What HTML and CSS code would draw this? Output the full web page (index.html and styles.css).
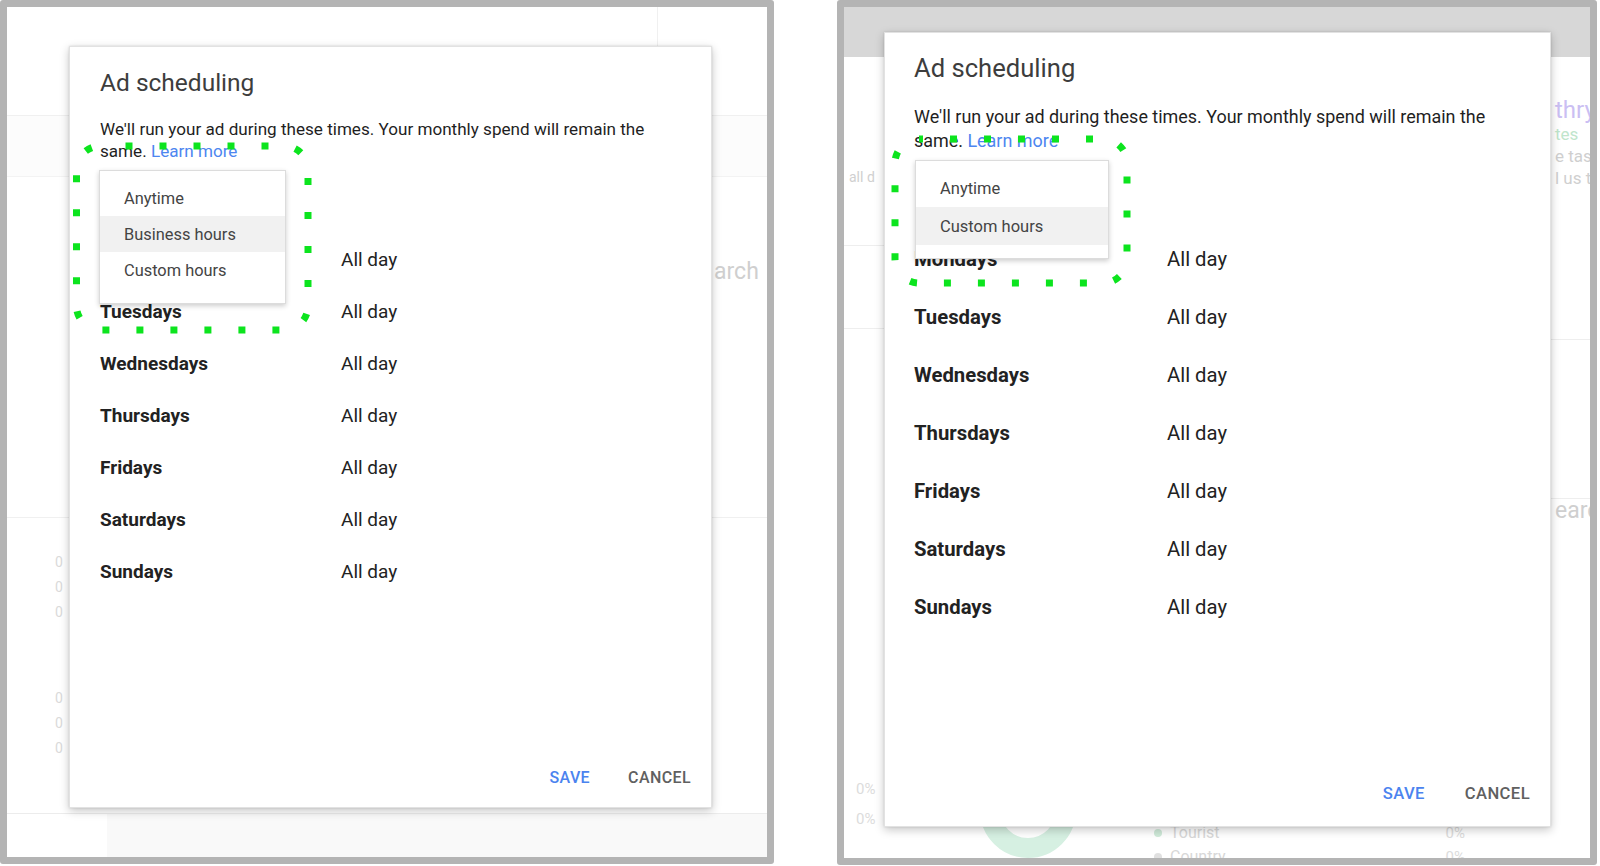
FILE: index.html
```html
<!DOCTYPE html>
<html lang="en">
<head>
<meta charset="utf-8">
<title>Ad scheduling</title>
<link rel="stylesheet" href="styles.css">
</head>
<body>
<div class="page">
  <section class="frame frame-left">
    <div class="bg bg-left">
      <div class="bgl-top"><div class="bgl-top-main"></div></div>
      <div class="bgl-band"></div>
      <div class="bgl-mid"><span class="faint-big">arch</span></div>
      <div class="bgl-lower">
        <div class="digits"><span>0</span><span>0</span><span>0</span></div>
        <div class="digits second"><span>0</span><span>0</span><span>0</span></div>
      </div>
      <div class="bgl-bottom"><div class="bgl-bottom-l"></div><div class="bgl-bottom-r"></div></div>
    </div>

    <div class="dialog dialog-left">
      <h2 class="d-title">Ad scheduling</h2>
      <p class="d-desc">We'll run your ad during these times. Your monthly spend will remain the same. <a class="d-link">Learn more</a></p>
      <div class="days">
        <div class="day">Mondays</div><div class="val">All day</div>
        <div class="day">Tuesdays</div><div class="val">All day</div>
        <div class="day">Wednesdays</div><div class="val">All day</div>
        <div class="day">Thursdays</div><div class="val">All day</div>
        <div class="day">Fridays</div><div class="val">All day</div>
        <div class="day">Saturdays</div><div class="val">All day</div>
        <div class="day">Sundays</div><div class="val">All day</div>
      </div>
      <div class="actions">
        <span class="btn btn-save">Save</span>
        <span class="btn btn-cancel">Cancel</span>
      </div>
      <ul class="menu">
        <li>Anytime</li>
        <li class="hl">Business hours</li>
        <li>Custom hours</li>
      </ul>
    </div>
  </section>

  <section class="frame frame-right">
    <div class="bg bg-right">
      <div class="bgr-head"></div>
      <div class="bgr-body">
        <div class="bgr-left">
          <span class="faint-sm alld">all d</span>
          <div class="rule r1"></div>
          <div class="rule r2"></div>
          <div class="pct"><span>0%</span><span>0%</span></div>
        </div>
        <div class="bgr-mid">
          <div class="chart-row">
            <div class="donut"></div>
            <div class="legend">
              <div class="leg"><i class="dot"></i>Tourist</div>
              <div class="leg"><i class="dot dot2"></i>Country</div>
            </div>
            <div class="legpct"><span>0%</span><span>0%</span></div>
          </div>
        </div>
        <div class="bgr-right">
          <span class="t-purple">thry</span>
          <span class="t-green">tes</span>
          <span class="t-gray">e tas</span>
          <span class="t-gray">l us t</span>
          <div class="rule r3"></div>
          <div class="rule r4"></div>
          <span class="faint-big earc">earc</span>
        </div>
      </div>
    </div>

    <div class="dialog dialog-right">
      <h2 class="d-title">Ad scheduling</h2>
      <p class="d-desc">We'll run your ad during these times. Your monthly spend will remain the same. <a class="d-link">Learn more</a></p>
      <div class="days">
        <div class="day">Mondays</div><div class="val">All day</div>
        <div class="day">Tuesdays</div><div class="val">All day</div>
        <div class="day">Wednesdays</div><div class="val">All day</div>
        <div class="day">Thursdays</div><div class="val">All day</div>
        <div class="day">Fridays</div><div class="val">All day</div>
        <div class="day">Saturdays</div><div class="val">All day</div>
        <div class="day">Sundays</div><div class="val">All day</div>
      </div>
      <div class="actions">
        <span class="btn btn-save">Save</span>
        <span class="btn btn-cancel">Cancel</span>
      </div>
      <ul class="menu">
        <li>Anytime</li>
        <li class="hl">Custom hours</li>
      </ul>
    </div>
  </section>

  <svg class="annot" width="1600" height="866" viewBox="0 0 1600 866" aria-hidden="true">
    <rect x="76.5" y="146" width="231.5" height="184" rx="24" fill="none" stroke="#0ce41e" stroke-width="7" stroke-dasharray="7 27" stroke-dashoffset="9"/>
    <rect x="895" y="139" width="232" height="144" rx="24" fill="none" stroke="#0ce41e" stroke-width="7" stroke-dasharray="7 27" stroke-dashoffset="3"/>
  </svg>
</div>
</body>
</html>
```

FILE: styles.css
```css
* { box-sizing: border-box; }
html, body { margin: 0; padding: 0; }
body {
  width: 1600px;
  height: 866px;
  overflow: hidden;
  background: #ffffff;
  font-family: Roboto, "Liberation Sans", Arial, sans-serif;
  color: #222;
}
.page {
  position: relative;
  display: flex;
  align-items: flex-start;
  gap: 63px;
  width: 1600px;
  height: 866px;
}

/* frames */
.frame {
  display: grid;
  border: 7px solid #b4b4b4;
  border-radius: 3px;
  background: #fff;
  overflow: hidden;
}
.frame > * { grid-area: 1 / 1; }
.frame-left { width: 774px; height: 864px; }
.frame-right { width: 760px; height: 865px; }

/* left background page */
.bg { display: flex; flex-direction: column; color: #d4d4d4; }
.bgl-top { height: 108px; display: flex; }
.bgl-top-main { width: 651px; border-right: 1px solid #f0f0f0; }
.bgl-band { height: 62px; background: #fcfcfc; border-top: 1px solid #f0f0f0; border-bottom: 1px solid #f3f3f3; }
.bgl-mid { height: 341px; padding: 83px 0 0 707px; border-bottom: 1px solid #f0f0f0; }
.faint-big { font-size: 23px; line-height: 24px; color: #cfcfcf; white-space: nowrap; }
.bgl-lower { height: 295px; padding: 32px 0 0 48px; }
.digits { display: flex; flex-direction: column; font-size: 14px; line-height: 25px; color: #dadada; }
.digits.second { margin-top: 61px; }
.bgl-bottom { flex: 1; display: flex; border-top: 1px solid #ececec; }
.bgl-bottom-l { width: 100px; background: #fff; }
.bgl-bottom-r { flex: 1; background: #f9f9f9; }

/* right background page */
.bgr-head { height: 50px; background: #d7d7d7; flex: none; }
.bgr-body { flex: 1; display: flex; }
.bgr-left { width: 40px; display: flex; flex-direction: column; padding-top: 110px; }
.faint-sm { font-size: 14px; line-height: 20px; color: #d0d0d0; white-space: nowrap; padding-left: 5px; }
.rule { height: 1px; background: #eeeeee; }
.r1 { margin-top: 58px; }
.r2 { margin-top: 82px; }
.pct { margin-top: 450px; display: flex; flex-direction: column; gap: 10px; font-size: 15px; line-height: 20px; color: #dcdcdc; padding-left: 12px; }
.bgr-mid { flex: 1; display: flex; flex-direction: column; padding-top: 705px; }
.chart-row { display: flex; align-items: flex-start; padding-left: 96px; }
.donut { width: 96px; height: 96px; border: 20px solid #d6f0e2; border-radius: 50%; }
.legend { margin: 61px 0 0 78px; display: flex; flex-direction: column; gap: 4px; font-size: 16px; line-height: 20px; color: #d8d8d8; }
.leg { display: flex; align-items: center; gap: 8px; }
.dot { width: 8px; height: 8px; border-radius: 50%; background: #cfead9; }
.dot2 { background: #e0e0e0; }
.legpct { margin: 61px 0 0 220px; display: flex; flex-direction: column; gap: 4px; font-size: 15px; line-height: 20px; color: #dcdcdc; }
.bgr-right { width: 39px; display: flex; flex-direction: column; padding-top: 40px; white-space: nowrap; overflow: hidden; }
.bgr-right span { padding-left: 4px; }
.t-purple { font-size: 24px; line-height: 26px; color: #cbbff3; }
.t-green { font-size: 17px; line-height: 22px; color: #bfe5cc; }
.t-gray { font-size: 17px; line-height: 22px; color: #cfcfcf; }
.r3 { margin-top: 150px; }
.r4 { margin-top: 158px; }
.earc { margin-top: 0; }

/* dialog */
.dialog {
  position: relative;
  align-self: start;
  justify-self: start;
  display: flex;
  flex-direction: column;
  background: #fff;
  border: 1px solid #e2e2e2;
  box-shadow: 0 3px 9px rgba(0, 0, 0, 0.22), 0 0 2px rgba(0, 0, 0, 0.12);
}
.d-title { margin: 0; font-weight: 400; color: #3d3d3d; }
.d-desc { margin: 0; color: #1f1f1f; }
.d-link { color: #4d86f0; text-decoration: none; }
.days { display: grid; align-items: center; }
.day { font-weight: 700; color: #222; }
.val { color: #222; }
.actions { margin-top: auto; display: flex; justify-content: flex-end; align-items: center; }
.btn { font-weight: 500; text-transform: uppercase; letter-spacing: 0.4px; line-height: 36px; }
.btn-save { color: #4b83ef; }
.btn-cancel { color: #606060; }

.menu {
  position: absolute;
  margin: 0;
  list-style: none;
  background: #fff;
  border: 1px solid #dcdcdc;
  box-shadow: 0 2px 5px rgba(0, 0, 0, 0.2);
  color: #444;
}
.menu li { display: flex; align-items: center; }
.menu li.hl { background: #f1f1f1; }

/* left dialog metrics */
.dialog-left { margin: 39px 0 0 62px; width: 643px; height: 762px; padding: 20px 20px 11px 30px; }
.dialog-left .d-title { font-size: 24.5px; line-height: 32px; }
.dialog-left .d-desc { margin-top: 19px; font-size: 17.1px; line-height: 22px; width: 575px; }
.dialog-left .days { margin-top: 71px; grid-template-columns: 241px 1fr; grid-auto-rows: 52px; }
.dialog-left .day, .dialog-left .val { font-size: 19px; }
.dialog-left .actions { gap: 38px; }
.dialog-left .btn { font-size: 16px; }
.dialog-left .menu { left: 29px; top: 123px; width: 187px; padding: 9px 0 15px; }
.dialog-left .menu li { height: 36px; padding-left: 24px; font-size: 16.4px; }

/* right dialog metrics */
.dialog-right { margin: 25px 0 0 40px; width: 667px; height: 795px; padding: 18px 20px 14px 29px; }
.dialog-right .d-title { font-size: 25.6px; line-height: 34px; }
.dialog-right .d-desc { margin-top: 20px; font-size: 17.95px; line-height: 24px; width: 605px; }
.dialog-right .days { margin-top: 77px; grid-template-columns: 253px 1fr; grid-auto-rows: 58px; }
.dialog-right .day, .dialog-right .val { font-size: 20.3px; }
.dialog-right .actions { gap: 40px; }
.dialog-right .btn { font-size: 16.6px; }
.dialog-right .menu { left: 30px; top: 127px; width: 194px; padding: 8px 0 13px; }
.dialog-right .menu li { height: 38px; padding-left: 24px; font-size: 16.5px; }

/* annotation overlay */
.annot { position: absolute; left: 0; top: 0; pointer-events: none; }
```
